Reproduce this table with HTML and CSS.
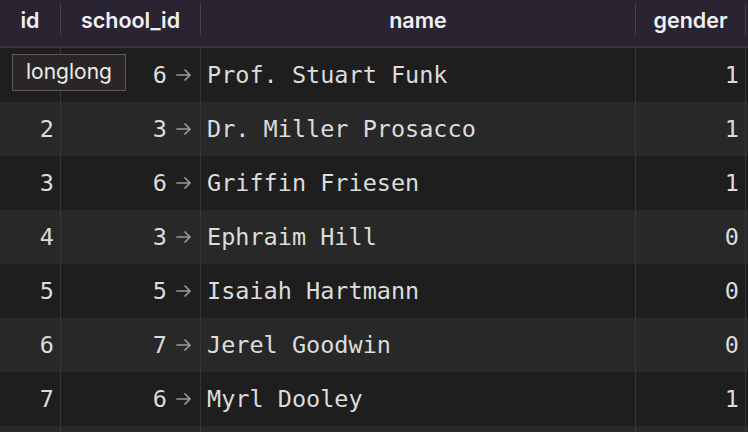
FILE: index.html
```html
<!DOCTYPE html>
<html>
<head>
<meta charset="utf-8">
<link rel="stylesheet" href="styles.css">
</head>
<body>
<div class="grid">
  <div class="row head">
    <div class="hc">id</div>
    <div class="hc">school_id</div>
    <div class="hc">name</div>
    <div class="hc last">gender</div>
  </div>
  <div class="row odd">
    <div class="c num first"><span class="tip">longlong</span></div>
    <div class="c num fk">6<svg class="arr" viewBox="0 0 16 14"><path d="M1 7H14M9 2L14 7L9 12"/></svg></div>
    <div class="c txt">Prof. Stuart Funk</div>
    <div class="c num">1</div>
  </div>
  <div class="row even">
    <div class="c num">2</div>
    <div class="c num fk">3<svg class="arr" viewBox="0 0 16 14"><path d="M1 7H14M9 2L14 7L9 12"/></svg></div>
    <div class="c txt">Dr. Miller Prosacco</div>
    <div class="c num">1</div>
  </div>
  <div class="row odd">
    <div class="c num">3</div>
    <div class="c num fk">6<svg class="arr" viewBox="0 0 16 14"><path d="M1 7H14M9 2L14 7L9 12"/></svg></div>
    <div class="c txt">Griffin Friesen</div>
    <div class="c num">1</div>
  </div>
  <div class="row even">
    <div class="c num">4</div>
    <div class="c num fk">3<svg class="arr" viewBox="0 0 16 14"><path d="M1 7H14M9 2L14 7L9 12"/></svg></div>
    <div class="c txt">Ephraim Hill</div>
    <div class="c num">0</div>
  </div>
  <div class="row odd">
    <div class="c num">5</div>
    <div class="c num fk">5<svg class="arr" viewBox="0 0 16 14"><path d="M1 7H14M9 2L14 7L9 12"/></svg></div>
    <div class="c txt">Isaiah Hartmann</div>
    <div class="c num">0</div>
  </div>
  <div class="row even">
    <div class="c num">6</div>
    <div class="c num fk">7<svg class="arr" viewBox="0 0 16 14"><path d="M1 7H14M9 2L14 7L9 12"/></svg></div>
    <div class="c txt">Jerel Goodwin</div>
    <div class="c num">0</div>
  </div>
  <div class="row odd">
    <div class="c num">7</div>
    <div class="c num fk">6<svg class="arr" viewBox="0 0 16 14"><path d="M1 7H14M9 2L14 7L9 12"/></svg></div>
    <div class="c txt">Myrl Dooley</div>
    <div class="c num">1</div>
  </div>
  <div class="row even">
    <div class="c num"></div>
    <div class="c num"></div>
    <div class="c txt"></div>
    <div class="c num"></div>
  </div>
</div>
</body>
</html>
```

FILE: styles.css
```css
html, body {
  margin: 0;
  padding: 0;
  background: #1e1e1e;
  overflow: hidden;
}
.grid {
  width: 748px;
  height: 432px;
  overflow: hidden;
}
.row {
  display: grid;
  grid-template-columns: 61px 140px 435px 110px 2px;
}
.head {
  height: 46px;
  background: #2a2432;
  border-bottom: 2px solid #3b3742;
}
.hc {
  margin-top: 4px;
  height: 31px;
  border-right: 1px solid #4a4452;
  display: flex;
  align-items: center;
  justify-content: center;
  font-family: "Inter", "Liberation Sans", sans-serif;
  font-weight: 600;
  font-size: 21.5px;
  color: #f2f0f4;
}
.row.odd { background: #1e1e1e; }
.row.even { background: #282828; }
.c {
  height: 54px;
  border-right: 1px solid #353535;
  display: flex;
  align-items: center;
  font-family: "DejaVu Sans Mono", "Liberation Mono", monospace;
  font-size: 23.5px;
  color: #dcdcdc;
  box-sizing: border-box;
}
.num {
  justify-content: flex-end;
  padding-right: 6px;
}
.num.fk {
  padding-right: 8px;
}
.txt {
  padding-left: 6px;
  white-space: nowrap;
}
.arr {
  width: 16px;
  height: 14px;
  margin-left: 9px;
  margin-top: -1px;
  fill: none;
  stroke: #9a9a9a;
  stroke-width: 1.7;
  stroke-linecap: round;
  stroke-linejoin: round;
}
.first {
  position: relative;
  overflow: visible;
}
.tip {
  position: absolute;
  left: 12px;
  top: 6px;
  width: 114px;
  height: 37px;
  box-sizing: border-box;
  background: #2a2627;
  border: 1px solid #5e5a5b;
  font-family: "Inter", "Liberation Sans", sans-serif;
  font-size: 21px;
  color: #ececec;
  display: flex;
  align-items: center;
  justify-content: center;
  padding-bottom: 2px;
  z-index: 2;
}
```
